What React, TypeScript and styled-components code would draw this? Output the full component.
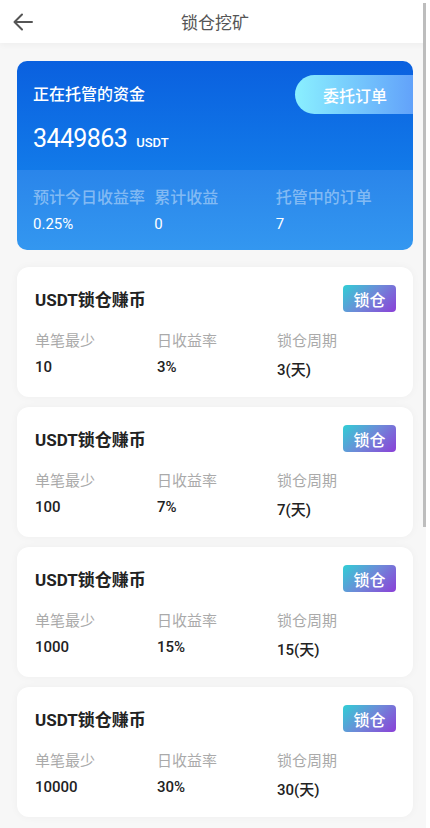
import React from "react";
import styled, { createGlobalStyle } from "styled-components";

const GlobalStyle = createGlobalStyle`
  html, body {
    margin: 0;
    padding: 0;
    height: 100%;
    overflow: hidden;
    background: #f7f7f7;
  }
  * { box-sizing: border-box; }
`;

const num = `"Roboto", "Noto Sans", sans-serif`;
const cjk = `"Roboto", "Noto Sans CJK SC", sans-serif`;

const Scroller = styled.div`
  height: 100vh;
  overflow-y: scroll;
  background: #f7f7f7;
  font-family: ${cjk};
  scrollbar-width: none;
  &::-webkit-scrollbar {
    display: none;
  }
`;

/* thin overlay scroll indicator on the right edge */
const ScrollTrack = styled.div`
  position: fixed;
  top: 0;
  right: 0;
  width: 4px;
  height: 100vh;
  background: #ffffff;
  z-index: 5;
`;

const ScrollThumb = styled.div`
  position: fixed;
  top: 3px;
  right: 4px;
  width: 3px;
  height: 524px;
  background: #bdbdbd;
  z-index: 5;
`;

const Page = styled.div`
  padding-bottom: 484px;
`;

const Header = styled.header`
  height: 43px;
  background: #fff;
  display: flex;
  align-items: center;
  justify-content: center;
  position: relative;
  box-shadow: 0 2px 6px rgba(0, 0, 0, 0.04);
`;

const BackButton = styled.button`
  position: absolute;
  left: 12px;
  top: 12px;
  width: 22px;
  height: 20px;
  border: 0;
  padding: 0;
  background: none;
  display: flex;
`;

const Title = styled.h1`
  margin: 0;
  font-size: 17px;
  font-weight: 400;
  color: #555;
  font-family: ${cjk};
`;

const Body = styled.main`
  padding: 18px 17px 0 17px;
  display: flex;
  flex-direction: column;
  gap: 17px;
`;

const FundCard = styled.section`
  border-radius: 10px;
  overflow: hidden;
  color: #fff;
`;

const FundTop = styled.div`
  height: 109px;
  background: linear-gradient(180deg, #0a60df 0%, #127ae9 100%);
  display: flex;
  justify-content: space-between;
  padding-top: 14px;
`;

const FundInfo = styled.div`
  padding-left: 16px;
  display: flex;
  flex-direction: column;
`;

const FundLabel = styled.div`
  font-size: 16px;
  font-weight: 500;
  line-height: 40px;
  height: 40px;
`;

const FundAmount = styled.div`
  display: flex;
  align-items: baseline;
  margin-top: 9px;
  gap: 9px;
`;

const Amount = styled.span`
  font-family: ${num};
  font-size: 25px;
  letter-spacing: -0.6px;
`;

const Unit = styled.span`
  font-family: ${num};
  font-size: 13px;
  font-weight: 500;
`;

const EntrustButton = styled.button`
  width: 118px;
  height: 39px;
  border: 0;
  border-radius: 20px 0 0 20px;
  background: linear-gradient(90deg, #8af0ff 0%, #62a2fa 100%);
  color: #fff;
  font-family: ${cjk};
  font-size: 16px;
  font-weight: 500;
  padding: 0 0 0 2px;
`;

const FundStats = styled.div`
  height: 80px;
  background: linear-gradient(180deg, #2a85ea 0%, #3397f0 100%);
  display: grid;
  grid-template-columns: repeat(3, 1fr);
  padding: 18px 16px 0;
`;

const Stat = styled.div`
  display: flex;
  flex-direction: column;
  gap: 6px;
`;

const StatLabel = styled.div`
  font-size: 16px;
  font-weight: 500;
  line-height: 20px;
  color: rgba(255, 255, 255, 0.42);
  white-space: nowrap;
`;

const StatValue = styled.div`
  font-family: ${num};
  font-size: 15px;
  line-height: 20px;
  color: #fff;
`;

const ProductList = styled.div`
  display: flex;
  flex-direction: column;
  gap: 10px;
`;

const ProductCard = styled.article`
  background: #fff;
  border-radius: 12px;
  box-shadow: 0 0 8px rgba(0, 0, 0, 0.04);
  padding: 18px 17px 20px;
  height: 130px;
`;

const ProductHead = styled.div`
  display: flex;
  justify-content: space-between;
  align-items: center;
  height: 27px;
  padding-left: 1px;
`;

const ProductName = styled.h2`
  margin: 0;
  font-size: 17px;
  font-weight: 700;
  color: #222;
  font-family: ${cjk};
`;

const LockBadge = styled.span`
  width: 53px;
  height: 27px;
  border-radius: 4px;
  background: linear-gradient(135deg, #30cfd5 0%, #6f88d8 50%, #8b3fd8 100%);
  color: #fff;
  font-size: 16px;
  font-weight: 500;
  display: flex;
  align-items: center;
  justify-content: center;
`;

const ProductStats = styled.div`
  display: grid;
  grid-template-columns: 122px 120px 1fr;
  margin-top: 19px;
  padding-left: 1px;
`;

const ProductStat = styled.div`
  display: flex;
  flex-direction: column;
  gap: 6px;
`;

const ProductLabel = styled.div`
  font-size: 15px;
  line-height: 20px;
  color: #aaa;
`;

const ProductValue = styled.div<{ $low?: boolean }>`
  font-family: ${cjk};
  font-size: 15px;
  font-weight: 500;
  line-height: 20px;
  color: #222;
  margin-top: ${(p) => (p.$low ? "3px" : "0")};
`;

const products = [
  { min: "10", rate: "3%", days: "3(天)" },
  { min: "100", rate: "7%", days: "7(天)" },
  { min: "1000", rate: "15%", days: "15(天)" },
  { min: "10000", rate: "30%", days: "30(天)" },
];

function BackArrow() {
  return (
    <svg width="22" height="20" viewBox="0 0 22 20" fill="none">
      <path
        d="M20 10H3M10 2.5L2.5 10L10 17.5"
        stroke="#555"
        strokeWidth="2"
        strokeLinecap="round"
        strokeLinejoin="round"
      />
    </svg>
  );
}

export default function App() {
  return (
    <>
      <GlobalStyle />
      <Scroller>
        <Page>
          <Header>
            <BackButton aria-label="返回">
              <BackArrow />
            </BackButton>
            <Title>锁仓挖矿</Title>
          </Header>
          <Body>
            <FundCard>
              <FundTop>
                <FundInfo>
                  <FundLabel>正在托管的资金</FundLabel>
                  <FundAmount>
                    <Amount>3449863</Amount>
                    <Unit>USDT</Unit>
                  </FundAmount>
                </FundInfo>
                <EntrustButton>委托订单</EntrustButton>
              </FundTop>
              <FundStats>
                <Stat>
                  <StatLabel>预计今日收益率</StatLabel>
                  <StatValue>0.25%</StatValue>
                </Stat>
                <Stat>
                  <StatLabel>累计收益</StatLabel>
                  <StatValue>0</StatValue>
                </Stat>
                <Stat>
                  <StatLabel>托管中的订单</StatLabel>
                  <StatValue>7</StatValue>
                </Stat>
              </FundStats>
            </FundCard>
            <ProductList>
              {products.map((p) => (
                <ProductCard key={p.min}>
                  <ProductHead>
                    <ProductName>USDT锁仓赚币</ProductName>
                    <LockBadge>锁仓</LockBadge>
                  </ProductHead>
                  <ProductStats>
                    <ProductStat>
                      <ProductLabel>单笔最少</ProductLabel>
                      <ProductValue>{p.min}</ProductValue>
                    </ProductStat>
                    <ProductStat>
                      <ProductLabel>日收益率</ProductLabel>
                      <ProductValue>{p.rate}</ProductValue>
                    </ProductStat>
                    <ProductStat>
                      <ProductLabel>锁仓周期</ProductLabel>
                      <ProductValue $low>{p.days}</ProductValue>
                    </ProductStat>
                  </ProductStats>
                </ProductCard>
              ))}
            </ProductList>
          </Body>
        </Page>
      </Scroller>
      <ScrollTrack />
      <ScrollThumb />
    </>
  );
}
